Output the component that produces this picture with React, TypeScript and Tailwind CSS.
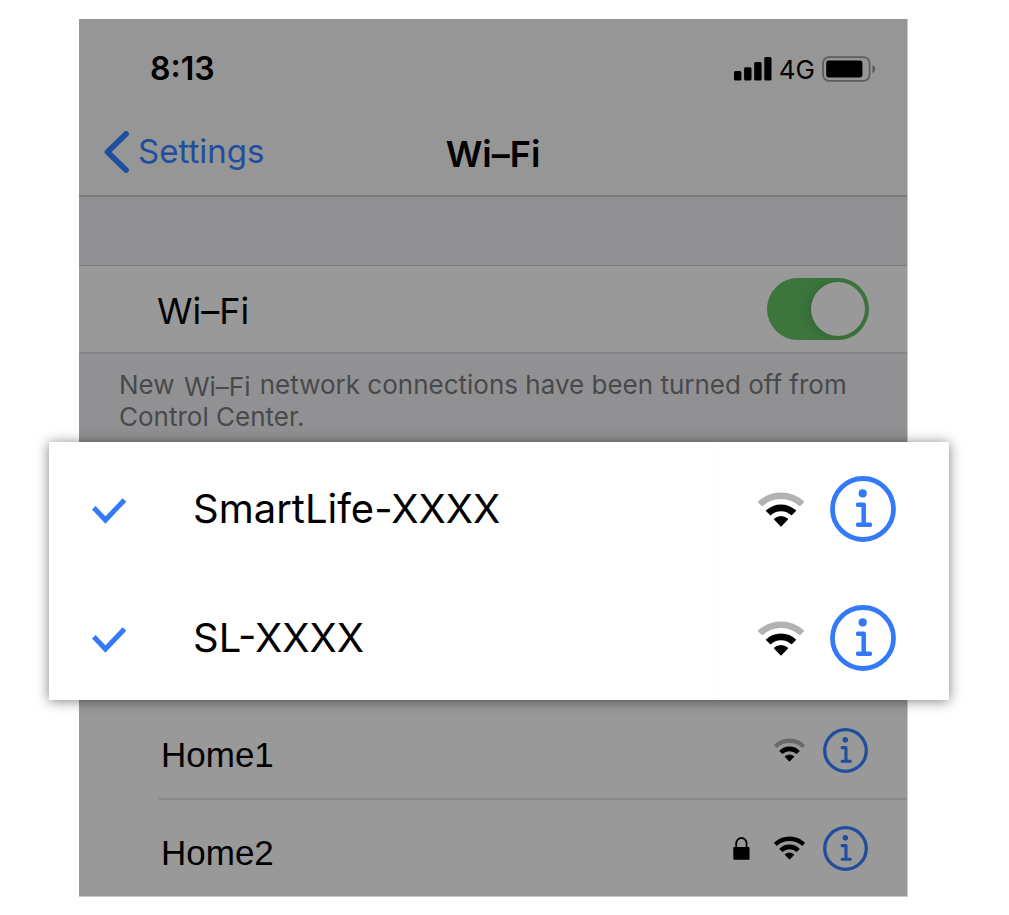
import { useState } from "react";

function WifiIcon({ className, weak = false }: { className: string; weak?: boolean }) {
  return (
    <svg viewBox="0 0 46 35" className={className} fill="none" stroke="currentColor" aria-hidden="true">
      <path d="M1.9 12.2A30.7 30.7 0 0 1 44.1 12.2" strokeWidth="6.4" opacity={weak ? 0.3 : 1} />
      <path d="M10.1 21.2A18.2 18.2 0 0 1 35.9 21.2" strokeWidth="6.8" />
      <path d="M23 33.6L16.8 27.2A9.4 9.4 0 0 1 29.2 27.2Z" fill="currentColor" strokeWidth="1.6" strokeLinejoin="round" />
    </svg>
  );
}

function InfoIcon({ className }: { className: string }) {
  return (
    <svg viewBox="0 0 66 66" className={className} fill="none" stroke="currentColor" aria-hidden="true">
      <circle cx="33" cy="33" r="30.5" strokeWidth="4.8" />
      <circle cx="32.7" cy="17.4" r="4.1" fill="currentColor" stroke="none" />
      <path d="M28 28.8h5.7v20M28 48.8h12" strokeWidth="4.5" strokeLinecap="round" strokeLinejoin="round" />
    </svg>
  );
}

function CheckIcon() {
  return (
    <svg viewBox="0 0 34 26" className="mt-2 h-[26px] w-[34px] shrink-0 text-[#3479f7]" fill="none" stroke="currentColor" aria-hidden="true">
      <path d="M1.8 9.8L13.4 22L32.4 2" strokeWidth="5" />
    </svg>
  );
}

function LockIcon() {
  return (
    <svg viewBox="0 0 17 23" className="h-[23px] w-[17px]" aria-hidden="true">
      <path d="M3.2 11V6.2a5.2 5.2 0 0 1 10.4 0V11" fill="none" stroke="currentColor" strokeWidth="1.8" />
      <rect x="0.3" y="10" width="16.2" height="12.7" rx="0.8" fill="currentColor" />
    </svg>
  );
}

function SignalIcon() {
  return (
    <svg viewBox="0 0 38 24" className="h-6 w-[38px]" fill="currentColor" aria-hidden="true">
      <rect x="0" y="14" width="7.4" height="9.6" rx="1.6" />
      <rect x="10.1" y="10.2" width="7.4" height="13.4" rx="1.6" />
      <rect x="20.2" y="5" width="7.4" height="18.6" rx="1.6" />
      <rect x="30.3" y="0" width="7.2" height="23.6" rx="1.6" />
    </svg>
  );
}

function BatteryIcon() {
  return (
    <svg viewBox="0 0 54 26" className="h-[26px] w-[54px]" aria-hidden="true">
      <rect x="1" y="1.2" width="46.6" height="23.6" rx="6" fill="none" stroke="#5d5d60" strokeWidth="1.8" />
      <rect x="4.2" y="4.6" width="36.2" height="16.8" rx="2.4" fill="#000" />
      <path d="M50.4 9c1.8.7 2.8 2.2 2.8 4s-1 3.3-2.8 4z" fill="#5d5d60" />
    </svg>
  );
}

function JoinedNetwork({ name }: { name: string }) {
  return (
    <li className="flex h-[129px] items-center pl-[43px]">
      <CheckIcon />
      <span className="ml-[67px] flex-1 pt-1 text-[40px]">{name}</span>
      <div className="flex h-full items-center border-l border-[#fafafa] pt-2 pr-[53px] pb-[3px] pl-10">
        <WifiIcon weak className="h-[35px] w-[46px]" />
        <button type="button" aria-label={`About ${name}`} className="ml-[26px] text-[#3479f7]">
          <InfoIcon className="h-[66px] w-[66px]" />
        </button>
      </div>
    </li>
  );
}

function OtherNetwork({ name, locked = false, weak = false }: { name: string; locked?: boolean; weak?: boolean }) {
  return (
    <li className="ml-20 flex h-[98px] items-center border-b-2 border-[#88888a] pr-[39px] pl-0.5 last:h-24 last:border-b-0">
      <span className="flex-1 pt-2.5 font-['Liberation_Sans',sans-serif] text-[35px]">{name}</span>
      {locked && <LockIcon />}
      <WifiIcon weak={weak} className="ml-6 h-6 w-[31px]" />
      <button type="button" aria-label={`About ${name}`} className="ml-[18px] text-[#1f4e9f]">
        <InfoIcon className="h-[45px] w-[45px]" />
      </button>
    </li>
  );
}

export default function App() {
  const [enabled, setEnabled] = useState(true);

  return (
    <div className="min-h-screen bg-white pt-[19px] pr-[60px] pb-[18px] pl-[49px] font-[Inter,sans-serif] text-black">
      <main>
        <div className="mr-[41px] ml-[30px] border-r border-[#c8c8c8] bg-[#969696]">
          <div className="flex h-[92px] items-center justify-between pt-2 pr-[31px] pl-[71px]">
            <time className="text-[32px] font-semibold">8:13</time>
            <div className="flex items-center gap-[7px]">
              <SignalIcon />
              <span className="text-[26px]">4G</span>
              <BatteryIcon />
            </div>
          </div>
          <header className="grid h-[86px] grid-cols-[1fr_auto_1fr] items-center border-b-2 border-[#7c7c7e] px-[25px] pb-[3px]">
            <a href="#settings" className="flex items-center gap-[9px] text-[33px] text-[#1f4e9f]">
              <svg viewBox="0 0 25 42" className="h-[42px] w-[25px]" fill="none" stroke="currentColor" aria-hidden="true">
                <path d="M22 3L3.5 21L22 39" strokeWidth="5.8" strokeLinecap="round" strokeLinejoin="round" />
              </svg>
              Settings
            </a>
            <h1 className="pt-1 text-[36px] font-semibold">Wi–Fi</h1>
          </header>
          <div className="h-[68px] bg-[#919193]" />
          <div className="flex h-[89px] items-center justify-between border-t border-b-2 border-t-[#7c7c7e] border-b-[#868688] bg-[#999999] pr-[38px] pl-[78px]">
            <label htmlFor="wifi-switch" className="pt-1 text-[36px]">
              Wi–Fi
            </label>
            <input
              id="wifi-switch"
              type="checkbox"
              role="switch"
              checked={enabled}
              onChange={(event) => setEnabled(event.target.checked)}
              className="flex h-[62px] w-[102px] appearance-none items-center overflow-hidden rounded-full bg-[#7c7c7e] p-1 before:h-[54px] before:w-[54px] before:rounded-full before:bg-[#999999] before:shadow-[-3px_1px_12px_rgba(0,0,0,0.15)] checked:justify-end checked:bg-[#3c763d]"
            />
          </div>
          <p className="bg-[#919193] px-10 pt-[15px] pb-[9px] text-[26px] leading-8 text-[#49494c]">
            New <span className="mx-0.5 inline-block align-middle leading-7">Wi–Fi</span> network connections have been turned off from
            <br />
            Control Center.
          </p>
        </div>

        <ul className="relative bg-white shadow-[0_1px_12px_rgba(0,0,0,0.5)]">
          <JoinedNetwork name="SmartLife-XXXX" />
          <JoinedNetwork name="SL-XXXX" />
        </ul>

        <ul className="mr-[41px] ml-[30px] border-r border-b border-[#c8c8c8] bg-[#999999] pt-0.5">
          <OtherNetwork name="Home1" weak />
          <OtherNetwork name="Home2" locked />
        </ul>
      </main>
    </div>
  );
}
